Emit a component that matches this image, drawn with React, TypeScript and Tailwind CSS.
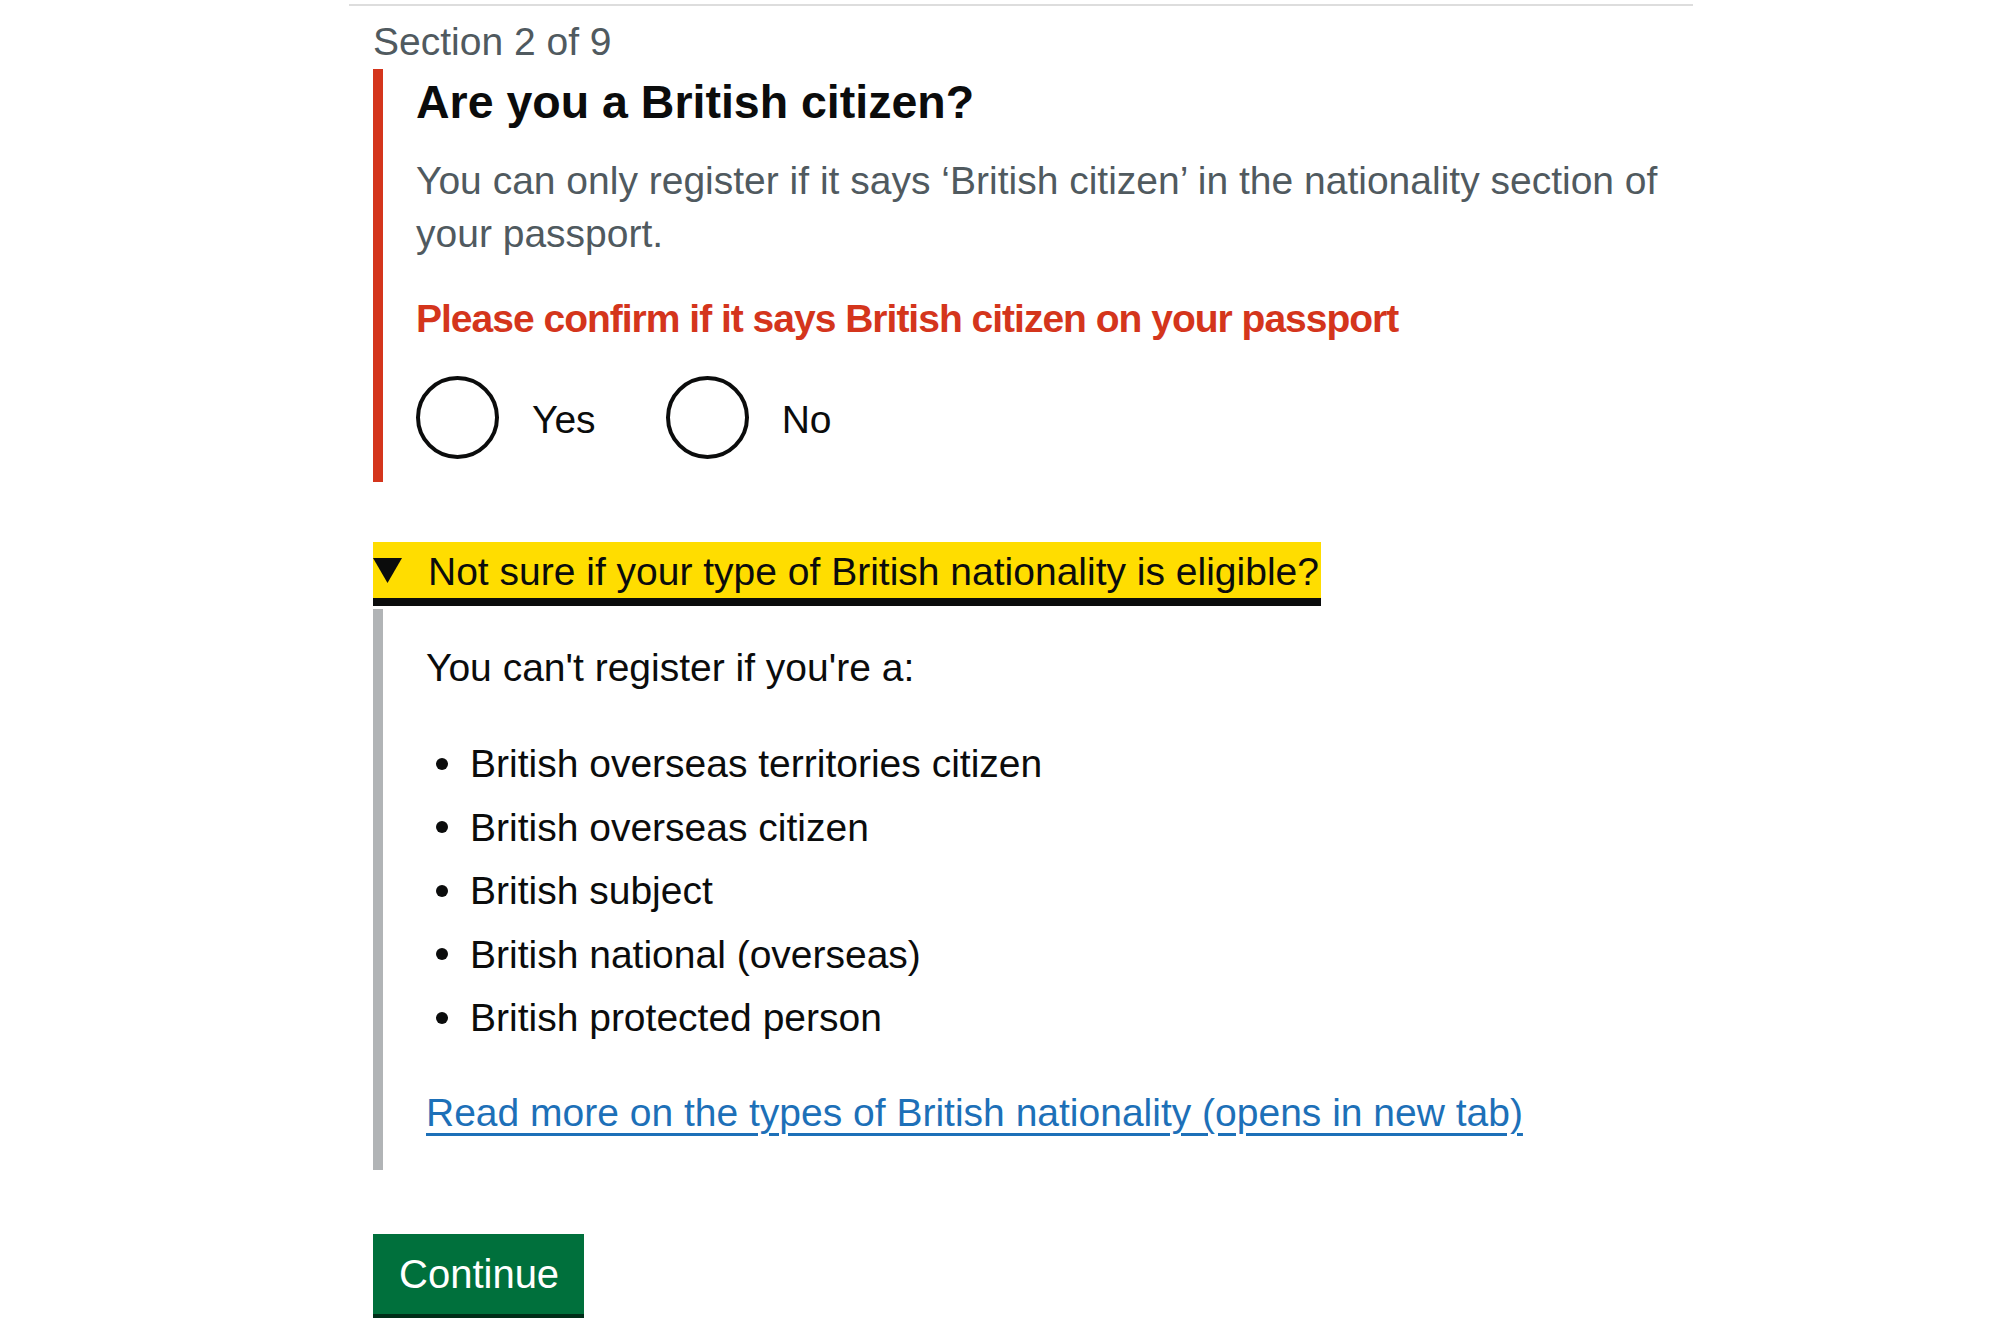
import { useState } from "react";

const items = [
  "British overseas territories citizen",
  "British overseas citizen",
  "British subject",
  "British national (overseas)",
  "British protected person",
];

function Radio({ label, checked, onSelect }: { label: string; checked: boolean; onSelect: () => void }) {
  return (
    <label className="flex cursor-pointer items-center" onClick={onSelect}>
      <span className="grid h-[83px] w-[83px] shrink-0 place-items-center rounded-full border-[4px] border-[#0b0c0c] bg-white">
        {checked ? <span className="h-[42px] w-[42px] rounded-full bg-[#0b0c0c]" /> : null}
      </span>
      <span className="ml-[33px] pt-[3px] text-[39px] leading-[53px] text-[#0b0c0c]">{label}</span>
    </label>
  );
}

export default function App() {
  const [answer, setAnswer] = useState("");
  const [open, setOpen] = useState(true);

  return (
    <div className="min-h-[1335px] bg-white font-['Liberation_Sans',Arial,sans-serif]">
      <div className="ml-[349px] w-[1344px] pt-[4px]">
        <div className="border-t-2 border-[#dddddd] pl-[24px] pr-[20px]">
          <p className="mt-[9px] text-[39px] leading-[53px] text-[#505a5f]">Section 2 of 9</p>

          <div className="mt-[1px] border-l-[10px] border-[#d4351c] pb-[23px] pl-[33px] pt-[3px]">
            <h1 className="text-[46.5px] font-bold leading-[60px] text-[#0b0c0c]">Are you a British citizen?</h1>
            <p className="mt-[22px] text-[39px] leading-[53px] text-[#505a5f]">
              You can only register if it says ‘British citizen’ in the nationality section of your passport.
            </p>
            <p className="mt-[32px] text-[39px] font-bold leading-[53px] tracking-[-1px] text-[#d4351c]">
              Please confirm if it says British citizen on your passport
            </p>
            <div className="mt-[31px] flex items-center gap-[70px]">
              <Radio label="Yes" checked={answer === "yes"} onSelect={() => setAnswer("yes")} />
              <Radio label="No" checked={answer === "no"} onSelect={() => setAnswer("no")} />
            </div>
          </div>

          <div className="mt-[60px]">
            <button
              className="relative inline-block cursor-pointer bg-[#ffdd00] pl-[55px] pr-[2px] pt-[3px] text-left text-[39px] leading-[53px] text-[#0b0c0c] shadow-[0_8px_0_#0b0c0c]"
              onClick={() => setOpen(!open)}
              type="button"
            >
              <svg className="absolute left-0 top-[16px]" width="29" height="25" viewBox="0 0 29 25">
                <polygon points="0,0 29,0 14.5,25" fill="#0b0c0c" />
              </svg>
              Not sure if your type of British nationality is eligible?
            </button>

            {open ? (
              <div className="mt-[11px] border-l-[10px] border-[#b1b4b6] pb-[31px] pl-[43px] pt-[32px]">
                <p className="text-[39px] leading-[53px] text-[#0b0c0c]">You can't register if you're a:</p>
                <ul className="mt-[43px] flex flex-col gap-[10.5px]">
                  {items.map((item) => (
                    <li className="flex items-center text-[39px] leading-[53px] text-[#0b0c0c]" key={item}>
                      <span className="ml-[10px] mr-[22px] h-[12px] w-[12px] shrink-0 rounded-full bg-[#0b0c0c]" />
                      {item}
                    </li>
                  ))}
                </ul>
                <p className="mt-[42px] text-[39px] leading-[53px]">
                  <a
                    className="text-[#1d70b8] underline decoration-[3px] underline-offset-[7px]"
                    href="#"
                  >
                    Read more on the types of British nationality (opens in new tab)
                  </a>
                </p>
              </div>
            ) : null}
          </div>

          <button
            className="mt-[64px] h-[80px] bg-[#00703c] pl-[26px] pr-[25px] text-[40px] leading-[53px] text-white shadow-[0_4px_0_#002d18]"
            type="button"
          >
            Continue
          </button>
        </div>
      </div>
    </div>
  );
}
